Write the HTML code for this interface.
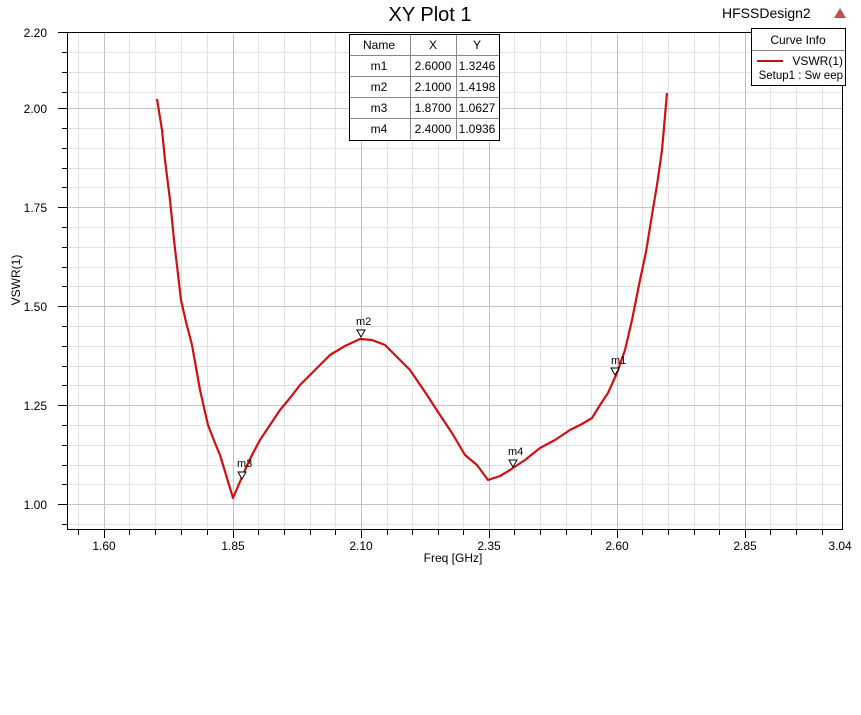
<!DOCTYPE html>
<html><head><meta charset="utf-8"><style>
html,body{margin:0;padding:0;background:#fff;width:861px;height:715px;overflow:hidden}
svg text{font-family:"Liberation Sans",sans-serif;fill:#000}
</style></head><body>
<svg width="861" height="715" viewBox="0 0 861 715" xmlns="http://www.w3.org/2000/svg">
<g id="grid" stroke-width="1" shape-rendering="crispEdges">
<!-- minor verticals -->
<g stroke="#e2e2e2">
<path d="M78.5 32V529M129.5 32V529M155.5 32V529M181.5 32V529M207.5 32V529M258.5 32V529M284.5 32V529M310.5 32V529M335.5 32V529M387.5 32V529M412.5 32V529M438.5 32V529M463.5 32V529M514.5 32V529M540.5 32V529M566.5 32V529M591.5 32V529M642.5 32V529M668.5 32V529M694.5 32V529M719.5 32V529M770.5 32V529M796.5 32V529M822.5 32V529"/>
<path d="M67 52.5H842M67 72.5H842M67 92.5H842M67 128.5H842M67 148.5H842M67 168.5H842M67 187.5H842M67 227.5H842M67 247.5H842M67 267.5H842M67 286.5H842M67 326.5H842M67 346.5H842M67 366.5H842M67 385.5H842M67 425.5H842M67 445.5H842M67 465.5H842M67 484.5H842M67 524.5H842"/>
</g>
<g stroke="#c4c4c4">
<path d="M104.5 32V529M233.5 32V529M361.5 32V529M489.5 32V529M617.5 32V529M745.5 32V529"/>
<path d="M67 108.5H842M67 207.5H842M67 306.5H842M67 405.5H842M67 504.5H842"/>
</g>
<!-- frame -->
<path d="M67.5 32V529.5H842.5V32M67 32.5H842" stroke="#000" fill="none"/>
<!-- y ticks -->
<g stroke="#000"><path d="M58 32.5H67M62 52.5H67M62 72.5H67M62 92.5H67M58 108.5H67M62 128.5H67M62 148.5H67M62 168.5H67M62 187.5H67M58 207.5H67M62 227.5H67M62 247.5H67M62 267.5H67M62 286.5H67M58 306.5H67M62 326.5H67M62 346.5H67M62 366.5H67M62 385.5H67M58 405.5H67M62 425.5H67M62 445.5H67M62 465.5H67M62 484.5H67M58 504.5H67M62 524.5H67"/>
<path d="M78.5 530V535M104.5 530V538M129.5 530V535M155.5 530V535M181.5 530V535M207.5 530V535M233.5 530V538M258.5 530V535M284.5 530V535M310.5 530V535M335.5 530V535M361.5 530V538M387.5 530V535M412.5 530V535M438.5 530V535M463.5 530V535M489.5 530V538M514.5 530V535M540.5 530V535M566.5 530V535M591.5 530V535M617.5 530V538M642.5 530V535M668.5 530V535M694.5 530V535M719.5 530V535M745.5 530V538M770.5 530V535M796.5 530V535M822.5 530V535"/></g>
</g>
<g font-size="12" text-anchor="end">
<text x="47" y="37">2.20</text><text x="47" y="113">2.00</text><text x="47" y="212">1.75</text><text x="47" y="311">1.50</text><text x="47" y="410">1.25</text><text x="47" y="509">1.00</text>
</g>
<g font-size="12" text-anchor="middle">
<text x="104" y="550">1.60</text><text x="233" y="550">1.85</text><text x="361" y="550">2.10</text><text x="489" y="550">2.35</text><text x="617" y="550">2.60</text><text x="745" y="550">2.85</text><text x="840" y="550">3.04</text>
<text x="453" y="562">Freq [GHz]</text>
</g>
<text x="20" y="280" font-size="12" text-anchor="middle" transform="rotate(-90 20 280)">VSWR(1)</text>
<text x="430" y="21" font-size="20" text-anchor="middle">XY Plot 1</text>
<text x="722" y="18" font-size="14">HFSSDesign2</text>
<path d="M840 8L846 18H834Z" fill="#c05050"/>
<polyline fill="none" stroke="#d01010" stroke-width="2.2" stroke-linejoin="round" points="157,99 162,130 165,160 170,200 174,240 181,300 186,322 192,345 200,390 208,425 215,443 220,455 233,498 245,470 252,455 260,440 270,425 280,410 290,398 300,385 315,370 330,355 345,346 360,339 372,340 385,345 398,358 410,370 425,392 440,415 452,433 465,455 477,465 488,480 500,476 510,470 525,460 540,448 555,440 570,430 582,424 592,418 600,405 608,393 617,373 625,350 632,320 640,280 646,252 652,215 657,185 662,150 667,93"/>
<g fill="#fff" stroke="#000" stroke-width="1">
<path d="M611 368H619L615 375Z"/><path d="M357 330H365L361 337Z"/><path d="M238 472H246L242 479Z"/><path d="M509 460H517L513 467Z"/>
</g>
<g font-size="11" fill="#000">
<text x="611" y="364">m1</text><text x="356" y="325">m2</text><text x="237" y="467">m3</text><text x="508" y="455">m4</text>
</g>
<!-- table -->
<rect x="349.5" y="34.5" width="150" height="106" fill="#fff" stroke="#000"/>
<g stroke="#888" shape-rendering="crispEdges"><path d="M350 55.5H499M350 76.5H499M350 97.5H499M350 118.5H499M410.5 35V140M456.5 35V140"/></g>
<g font-size="12" text-anchor="middle">
<text x="379" y="49">Name</text><text x="433" y="49">X</text><text x="477" y="49">Y</text>
<text x="379" y="70">m1</text><text x="433" y="70">2.6000</text><text x="477" y="70">1.3246</text>
<text x="379" y="91">m2</text><text x="433" y="91">2.1000</text><text x="477" y="91">1.4198</text>
<text x="379" y="112">m3</text><text x="433" y="112">1.8700</text><text x="477" y="112">1.0627</text>
<text x="379" y="133">m4</text><text x="433" y="133">2.4000</text><text x="477" y="133">1.0936</text>
</g>
<!-- legend -->
<rect x="751.5" y="28.5" width="94" height="57" fill="#fff" stroke="#000"/>
<path d="M752 50.5H845" stroke="#888"/>
<text x="798" y="44" font-size="12" text-anchor="middle">Curve Info</text>
<path d="M757 61H783" stroke="#c01010" stroke-width="2"/>
<text x="843" y="65" font-size="12" text-anchor="end">VSWR(1)</text>
<text x="843" y="79" font-size="11.5" text-anchor="end">Setup1 : Sw eep</text>
</svg>
</body></html>
